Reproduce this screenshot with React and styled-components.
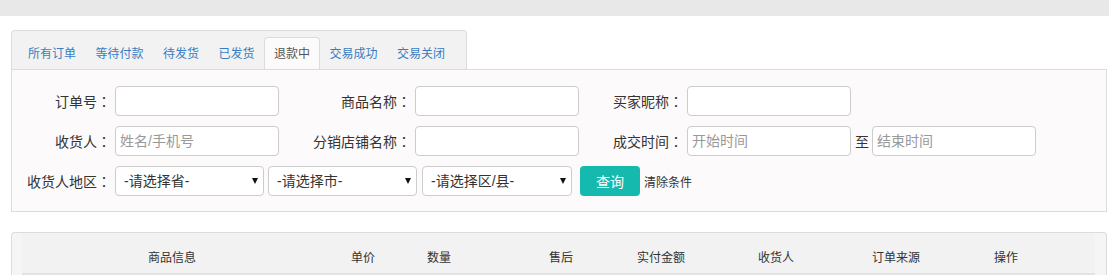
import React from "react";
import styled, { createGlobalStyle } from "styled-components";

const Global = createGlobalStyle`
  html, body { margin: 0; padding: 0; background: #fff; }
  body {
    font-family: "Liberation Sans", "Noto Sans CJK SC", sans-serif;
    color: #333;
    font-size: 14px;
  }
  * { box-sizing: border-box; }
`;

const TopBar = styled.div`
  height: 16px;
  background: #e8e8e8;
`;

const Page = styled.div`
  padding: 14px 2px 0 11px;
`;

const TabRow = styled.div`
  display: flex;
`;

const TabBar = styled.div`
  display: flex;
  align-items: flex-end;
  background: #f2f2f2;
  border: 1px solid #dcdcdc;
  border-bottom: none;
  border-radius: 4px 4px 0 0;
  padding: 6px 11px 0 6px;
`;

const Tab = styled.div`
  height: 32px;
  display: flex;
  align-items: center;
  padding: 0 9px;
  margin-right: -0.5px;
  font-size: 12px;
  line-height: 1;
  white-space: nowrap;
  border: 1px solid ${(p) => (p.$active ? "#dcdcdc" : "transparent")};
  border-bottom: none;
  border-radius: 4px 4px 0 0;
  background: ${(p) => (p.$active ? "#fcfbfb" : "transparent")};
  color: ${(p) => (p.$active ? "#555" : "#3a7cc0")};
  cursor: pointer;
`;

const Panel = styled.div`
  background: #fcfafb;
  border: 1px solid #dcdcdc;
  padding: 16px 0 15px 0;
  display: flex;
  flex-direction: column;
  gap: 10px;
`;

const Row = styled.div`
  display: flex;
  align-items: center;
  height: 30px;
`;

const Label = styled.label`
  width: ${(p) => p.$w}px;
  text-align: right;
  margin-right: 4px;
  font-size: 14px;
  line-height: 30px;
  white-space: nowrap;
  color: #333;
`;

const Colon = styled.span`
  display: inline-block;
  width: 1em;
  text-align: center;
  font-family: "Noto Sans CJK JP", "Noto Sans CJK TC", sans-serif;
`;

const Input = styled.input`
  width: 164px;
  height: 30px;
  border: 1px solid #cccccc;
  border-radius: 4px;
  background: #fff;
  padding: 0 4px;
  font-family: inherit;
  font-size: 14px;
  color: #333;
  outline: none;
  &::placeholder { color: #999; }
`;

const To = styled.span`
  font-size: 14px;
  margin: 0 3px 0 4px;
  color: #333;
`;

const SelectWrap = styled.div`
  position: relative;
  width: ${(p) => p.$w}px;
  height: 30px;
  margin-right: ${(p) => p.$mr}px;
`;

const Select = styled.select`
  appearance: none;
  -webkit-appearance: none;
  width: 100%;
  height: 30px;
  border: 1px solid #cccccc;
  border-radius: 4px;
  background: #fff;
  padding: 0 8px;
  font-family: inherit;
  font-size: 14px;
  color: #333;
  outline: none;
`;

const Arrow = styled.span`
  position: absolute;
  right: 6px;
  top: 12px;
  width: 0;
  height: 0;
  border-left: 3.5px solid transparent;
  border-right: 3.5px solid transparent;
  border-top: 6px solid #111;
  pointer-events: none;
`;

const Button = styled.button`
  margin-left: 4px;
  width: 60px;
  height: 30px;
  border: none;
  border-radius: 4px;
  background: #16b9ad;
  color: #fff;
  font-family: inherit;
  font-size: 14px;
  cursor: pointer;
`;

const Clear = styled.span`
  margin-left: 4px;
  font-size: 12px;
  color: #333;
  cursor: pointer;
`;

const TableBox = styled.div`
  margin-top: 20px;
  border: 1px solid #dcdcdc;
  border-bottom: none;
  border-radius: 4px 4px 0 0;
  background: #f5f5f5;
  padding: 0 11px 0 10px;
`;

const HeadRow = styled.div`
  display: flex;
  height: 42px;
  padding-top: 6px;
  background: #f2f2f2;
  border-bottom: 2px solid #e3e3e3;
`;

const HeadCell = styled.div`
  width: ${(p) => p.$w}px;
  flex: none;
  display: flex;
  justify-content: center;
  align-items: center;
  white-space: nowrap;
  font-size: 12px;
  color: #333;
`;

const tabs = ["所有订单", "等待付款", "待发货", "已发货", "退款中", "交易成功", "交易关闭"];

const heads = [
  ["商品信息", 300],
  ["单价", 82],
  ["数量", 70],
  ["售后", 174],
  ["实付金额", 26],
  ["收货人", 204],
  ["订单来源", 36],
  ["操作", 184],
];

const Field = ({ w, children }) => (
  <Label $w={w}>
    {children}
    <Colon>：</Colon>
  </Label>
);

export default function App() {
  return (
    <>
      <Global />
      <TopBar />
      <Page>
        <TabRow>
          <TabBar>
            {tabs.map((t) => (
              <Tab key={t} $active={t === "退款中"}>
                {t}
              </Tab>
            ))}
          </TabBar>
        </TabRow>
        <Panel>
          <Row>
            <Field w={99}>订单号</Field>
            <Input />
            <Field w={132}>商品名称</Field>
            <Input />
            <Field w={104}>买家昵称</Field>
            <Input />
          </Row>
          <Row>
            <Field w={99}>收货人</Field>
            <Input placeholder="姓名/手机号" />
            <Field w={132}>分销店铺名称</Field>
            <Input />
            <Field w={104}>成交时间</Field>
            <Input placeholder="开始时间" />
            <To>至</To>
            <Input placeholder="结束时间" />
          </Row>
          <Row>
            <Field w={99}>收货人地区</Field>
            <SelectWrap $w={149} $mr={4}>
              <Select defaultValue="">
                <option value="">-请选择省-</option>
              </Select>
              <Arrow />
            </SelectWrap>
            <SelectWrap $w={149} $mr={5}>
              <Select defaultValue="">
                <option value="">-请选择市-</option>
              </Select>
              <Arrow />
            </SelectWrap>
            <SelectWrap $w={150} $mr={4}>
              <Select defaultValue="">
                <option value="">-请选择区/县-</option>
              </Select>
              <Arrow />
            </SelectWrap>
            <Button>查询</Button>
            <Clear>清除条件</Clear>
          </Row>
        </Panel>
        <TableBox>
          <HeadRow>
            {heads.map(([t, w]) => (
              <HeadCell key={t} $w={w}>
                {t}
              </HeadCell>
            ))}
          </HeadRow>
        </TableBox>
      </Page>
    </>
  );
}
